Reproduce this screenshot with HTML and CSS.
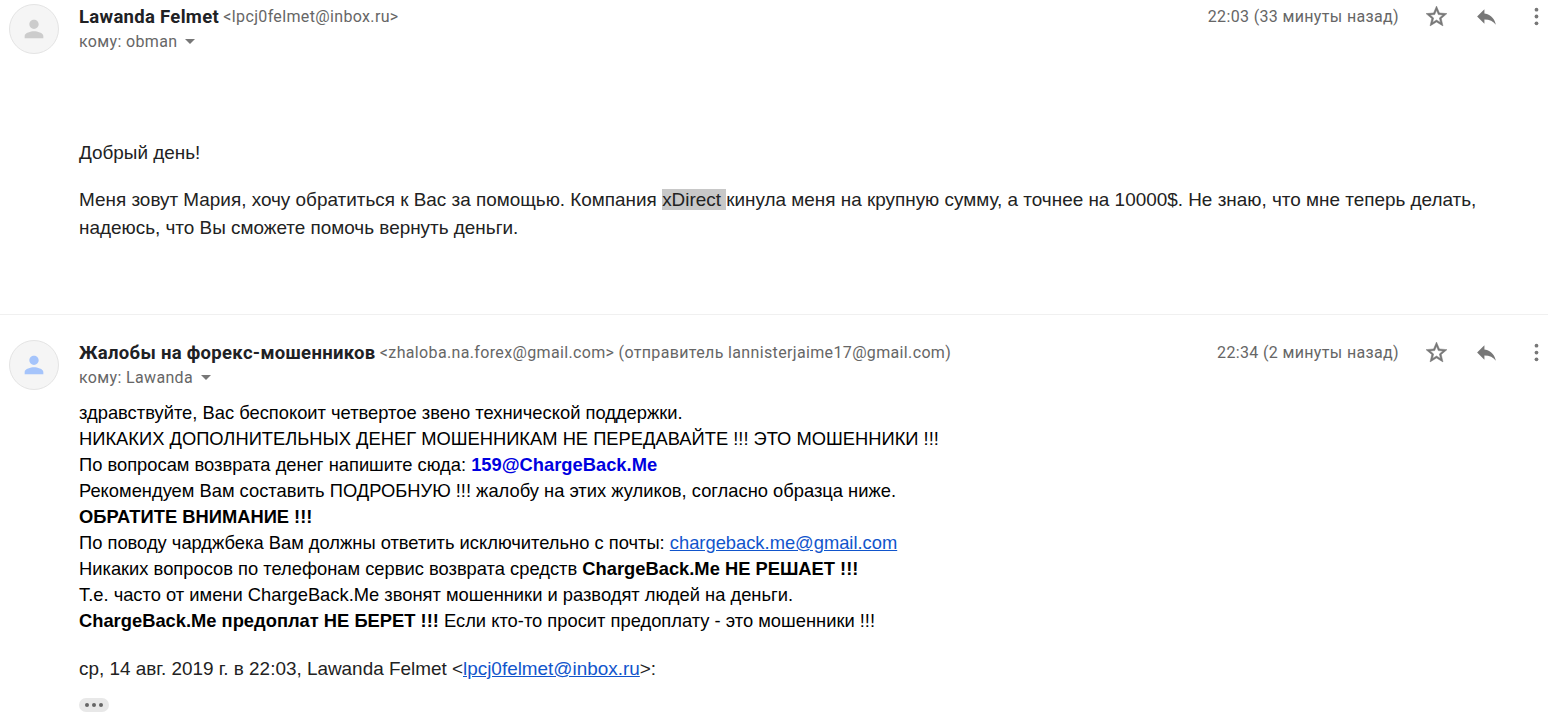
FILE: index.html
```html
<!DOCTYPE html>
<html lang="ru">
<head>
    <meta charset="UTF-8">
    <title>Почта</title>
    <link rel="stylesheet" href="styles.css">
</head>
<body>
    <svg class="sprite" width="0" height="0">
        <symbol id="person" viewBox="0 0 24 24"><path d="M12 12c2.21 0 4-1.79 4-4s-1.79-4-4-4-4 1.79-4 4 1.79 4 4 4zm0 2c-2.67 0-8 1.34-8 4v2h16v-2c0-2.66-5.33-4-8-4z"/></symbol>
        <symbol id="star" viewBox="0 0 24 24"><path d="M22 9.24l-7.19-.62L12 2 9.19 8.63 2 9.24l5.46 4.73L5.82 21 12 17.27 18.18 21l-1.63-7.03L22 9.24zM12 15.4l-3.76 2.27 1-4.28-3.32-2.88 4.38-.38L12 6.1l1.71 4.04 4.38.38-3.32 2.88 1 4.28L12 15.4z"/></symbol>
        <symbol id="reply" viewBox="0 0 24 24"><path d="M10 9V5l-7 7 7 7v-4.1c5 0 8.5 1.6 11 5.1-1-5-4-10-11-11z"/></symbol>
        <symbol id="more" viewBox="0 0 24 24"><circle cx="12" cy="5.5" r="1.8"/><circle cx="12" cy="12" r="1.8"/><circle cx="12" cy="18.5" r="1.8"/></symbol>
    </svg>

    <div class="message first">
        <div class="avatar"><svg><use href="#person"/></svg></div>
        <div class="main">
            <div class="header">
                <div class="sender"><b>Lawanda Felmet</b> <span>&lt;lpcj0felmet@inbox.ru&gt;</span></div>
                <div class="date">22:03 (33 минуты назад)</div>
                <div class="actions">
                    <svg class="star"><use href="#star"/></svg>
                    <svg><use href="#reply"/></svg>
                    <svg><use href="#more"/></svg>
                </div>
            </div>
            <div class="to">кому: obman<i class="arrow"></i></div>
            <div class="letter">
                <p>Добрый день!</p>
                <p>Меня зовут Мария, хочу обратиться к Вас за помощью. Компания <mark>xDirect </mark>кинула меня на крупную сумму, а точнее на 10000$. Не знаю, что мне теперь делать,<br>надеюсь, что Вы сможете помочь вернуть деньги.</p>
            </div>
        </div>
    </div>

    <div class="message second">
        <div class="avatar blue"><svg><use href="#person"/></svg></div>
        <div class="main">
            <div class="header">
                <div class="sender"><b>Жалобы на форекс-мошенников</b> <span>&lt;zhaloba.na.forex@gmail.com&gt; (отправитель lannisterjaime17@gmail.com)</span></div>
                <div class="date">22:34 (2 минуты назад)</div>
                <div class="actions">
                    <svg class="star"><use href="#star"/></svg>
                    <svg><use href="#reply"/></svg>
                    <svg><use href="#more"/></svg>
                </div>
            </div>
            <div class="to">кому: Lawanda<i class="arrow"></i></div>
            <div class="answer">
                <div>здравствуйте, Вас беспокоит четвертое звено технической поддержки.</div>
                <div>НИКАКИХ ДОПОЛНИТЕЛЬНЫХ ДЕНЕГ МОШЕННИКАМ НЕ ПЕРЕДАВАЙТЕ !!! ЭТО МОШЕННИКИ !!!</div>
                <div>По вопросам возврата денег напишите сюда: <b class="site">159@ChargeBack.Me</b></div>
                <div>Рекомендуем Вам составить ПОДРОБНУЮ !!! жалобу на этих жуликов, согласно образца ниже.</div>
                <div><b>ОБРАТИТЕ ВНИМАНИЕ !!!</b></div>
                <div>По поводу чарджбека Вам должны ответить исключительно с почты: <a href="#">chargeback.me@gmail.com</a></div>
                <div>Никаких вопросов по телефонам сервис возврата средств <b>ChargeBack.Me НЕ РЕШАЕТ !!!</b></div>
                <div>Т.е. часто от имени ChargeBack.Me звонят мошенники и разводят людей на деньги.</div>
                <div><b>ChargeBack.Me предоплат НЕ БЕРЕТ !!!</b> Если кто-то просит предоплату - это мошенники !!!</div>
            </div>
            <div class="quote">ср, 14 авг. 2019 г. в 22:03, Lawanda Felmet &lt;<a href="#">lpcj0felmet@inbox.ru</a>&gt;:</div>
            <div class="dots"><i></i><i></i><i></i></div>
        </div>
    </div>
</body>
</html>
```
FILE: styles.css
```css
body {
    margin: 0;
    height: 722px;
    overflow: hidden;
    background: #fff;
    color: #222;
    font-family: "Liberation Sans", Arial, sans-serif;
    font-size: 18.92px;
    white-space: nowrap;
}

.sprite {
    display: block;
}

.message {
    display: flex;
    box-sizing: border-box;
    width: 1548px;
    padding-left: 9px;
}

.first {
    height: 315px;
    padding-top: 4px;
    border-bottom: 1px solid #f0f0f0;
}

.second {
    padding-top: 25px;
}

.avatar {
    display: flex;
    align-items: center;
    justify-content: center;
    box-sizing: border-box;
    width: 50px;
    height: 50px;
    margin-right: 20px;
    border: 1px solid #e4e4e4;
    border-radius: 50%;
    background: #f5f5f5;
    fill: #ccc;
}

.avatar svg {
    width: 28px;
    height: 28px;
}

.blue {
    fill: #a5c4fb;
}

.main {
    flex: 1;
}

.header {
    display: flex;
    height: 25px;
    font-family: Roboto, sans-serif;
    font-size: 16px;
    line-height: 25px;
    letter-spacing: 0.35px;
    color: #666;
}

.sender {
    flex: 1;
}

.sender b {
    font-size: 18.5px;
    line-height: 1;
    letter-spacing: 0.3px;
    vertical-align: -1px;
    color: #202124;
}

.date {
    margin-right: 25px;
}

.actions {
    display: flex;
    gap: 25px;
    margin-right: -1px;
    fill: #777;
}

.actions svg {
    width: 25px;
    height: 25px;
}

.star {
    stroke: #777;
    stroke-width: 0.5px;
}

.to {
    display: flex;
    align-items: center;
    height: 25px;
    font-family: Roboto, sans-serif;
    font-size: 16px;
    letter-spacing: 0.35px;
    color: #666;
}

.arrow {
    margin-left: 8px;
    border: 5px solid transparent;
    border-top-color: #777;
    border-bottom: 0;
}

.letter {
    padding-top: 85px;
    line-height: 28px;
}

.letter p {
    margin: 0 0 19px;
}

mark {
    padding: 0;
    background: #c8c8c8;
    color: #222;
}

.answer {
    padding-top: 10px;
    font-size: 18.34px;
    line-height: 26px;
    color: #000;
}

.site {
    color: #0000e0;
}

a {
    color: #15c;
}

.quote {
    padding-top: 22px;
    line-height: 26px;
}

.dots {
    display: flex;
    align-items: center;
    justify-content: center;
    gap: 3px;
    width: 30px;
    height: 14px;
    margin-top: 16px;
    border-radius: 7px;
    background: #e8e8e8;
}

.dots i {
    width: 4px;
    height: 4px;
    border-radius: 50%;
    background: #666;
}
```
